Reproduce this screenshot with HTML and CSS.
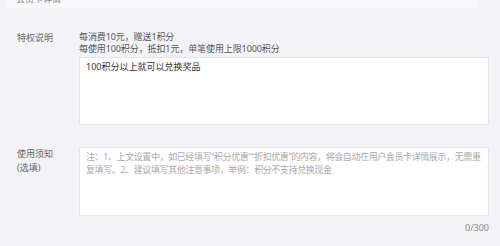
FILE: index.html
```html
<!DOCTYPE html>
<html lang="zh-CN">
<head>
  <meta charset="UTF-8" />
  <title>会员卡详情</title>
  <link rel="stylesheet" href="styles.css">
</head>
<body>
  <div class="panel">
    <!-- section title, scrolled half out of view -->
    <div class="section-head">
      <h3>会员卡详情</h3>
    </div>

    <div class="form-row first">
      <label class="row-label">特权说明</label>
      <div class="row-body">
        <p class="hint">每消费10元，赠送1积分</p>
        <p class="hint">每使用100积分，抵扣1元，单笔使用上限1000积分</p>
        <textarea class="field field-short">100积分以上就可以兑换奖品</textarea>
      </div>
    </div>

    <div class="form-row notes">
      <label class="row-label">使用须知<br>(选填)</label>
      <div class="row-body">
        <textarea class="field field-notes" placeholder="注：1、上文设置中，如已经填写“积分优惠”“折扣优惠”的内容，将会自动在用户会员卡详情展示，无需重复填写。2、建议填写其他注意事项，举例：积分不支持兑换现金"></textarea>
        <div class="counter">0/300</div>
      </div>
    </div>
  </div>
</body>
</html>
```

FILE: styles.css
```css
body {
  margin: 0;
  background: #f3f3f7;
  font-family: "Noto Sans", "Noto Sans CJK SC", sans-serif;
  font-size: 9px;
  color: #555;
}
.panel {
  width: 500px;
  height: 246px;
  overflow: hidden;
}
.section-head {
  height: 8px;
  margin: 0 22px 0 5px;
  background: #f8f8fa;
  overflow: hidden;
}
.section-head h3 {
  margin: -7px 0 0 11px;
  font-size: 9px;
  font-weight: normal;
  line-height: 12px;
  color: #888;
}
.form-row {
  display: flex;
  padding-left: 17px;
}
.form-row.first {
  margin-top: 23px;
}
.form-row.notes {
  margin-top: 22px;
}
.row-label {
  width: 62px;
  flex: none;
  line-height: 14px;
  padding-top: 0;
  color: #666;
}
.row-body {
  width: 410px;
}
.hint {
  margin: 0;
  line-height: 12px;
  letter-spacing: -0.1px;
  color: #555;
}
.field {
  display: block;
  box-sizing: border-box;
  width: 410px;
  margin: 2px 0 0;
  padding: 2px 2px 2px 6px;
  border: 1px solid #e6e6ea;
  background: #fff;
  font-family: inherit;
  font-size: 9px;
  line-height: 13px;
  color: #333;
  resize: none;
  outline: none;
}
.field-short {
  height: 68px;
}
.field-notes {
  height: 69px;
  margin-top: 0;
  letter-spacing: -0.4px;
}
.field-notes::placeholder {
  color: #aaa;
}
.counter {
  text-align: right;
  line-height: 14px;
  margin-top: 5px;
  color: #888;
}
```
